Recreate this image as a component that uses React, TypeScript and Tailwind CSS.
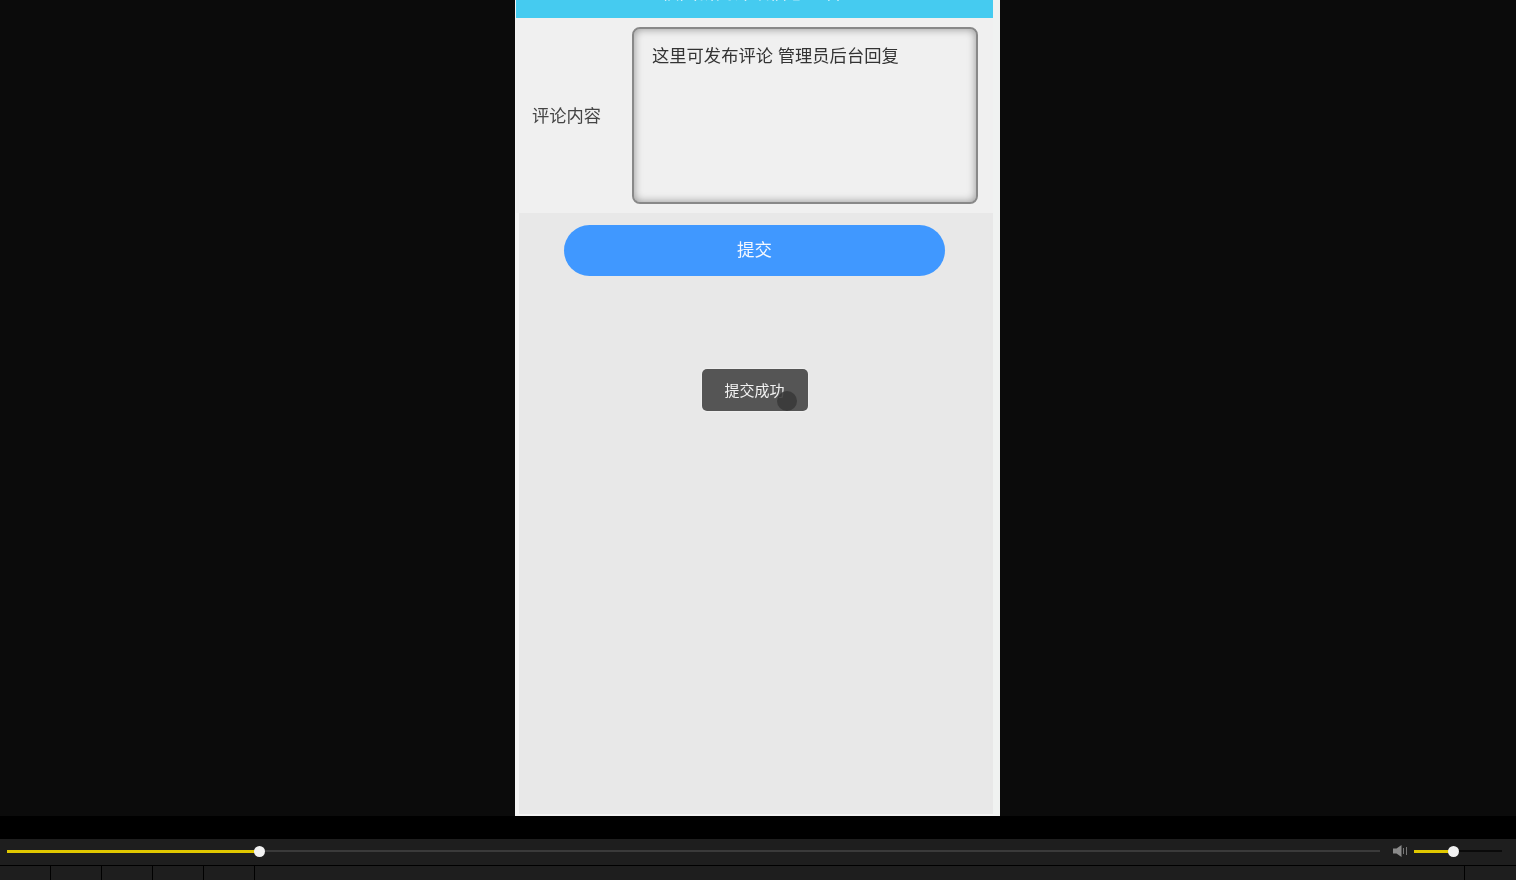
const font = { fontFamily: '"Liberation Sans","Noto Sans CJK SC",sans-serif' };

function Slider({ fill, track, knob, grow }: { fill: number; track: string; knob: number; grow?: boolean }) {
  return (
    <div className={`relative h-[2px] ${track} ${grow ? "flex-1" : "w-[88px]"}`}>
      <div className="absolute left-0 top-[-0.5px] h-[3px] bg-[#e0c800]" style={{ width: fill }} />
      <div
        className="absolute top-[-4.5px] h-[11px] w-[11px] rounded-full bg-[#f2f2f2]"
        style={{ left: knob }}
      />
    </div>
  );
}

export default function App() {
  return (
    <div className="flex h-[880px] w-[1516px] flex-col overflow-hidden bg-black blur-[0.35px]" style={font}>
      <div className="flex h-[816px] justify-center bg-[#0b0b0b]">
        <div className="ml-[-1px] flex h-[816px] w-[485px] flex-col border-b-[2px] border-l-[4px] border-r-[7px] border-b-[#f4f4f4] border-l-[#f4f4f4] border-r-[#f0f2f1] bg-[#e8e8e8]">
          <div className="-ml-[3px] flex h-[18px] items-end justify-center overflow-hidden bg-[#45cbf0] pr-[6px]">
            <span className="mb-[13px] whitespace-nowrap text-[18px] leading-[24px] text-[#f4fbfe]">校园新闻详细信息查看</span>
          </div>
          <div className="-ml-[3px] flex h-[195px] items-center bg-[#f0f0f0] pr-[15px]">
            <div className="w-[116px] pl-[16px] pt-[3px] text-[17.25px] text-[#444444]">评论内容</div>
            <div className="h-[177px] flex-1 rounded-[8px] border-2 border-[#888888] bg-[#f0f0f0] px-[18px] pb-[14px] pt-[15px] text-[17.3px] leading-[24px] text-[#333333] shadow-[inset_0_0_8px_rgba(0,0,0,0.4)]">
              这里可发布评论 管理员后台回复
            </div>
          </div>
          <div className="mt-[12px] flex justify-center pr-[3px]">
            <div className="flex h-[51px] w-[381px] items-center justify-center rounded-full bg-[#4098ff] text-[17.5px] text-[#f4f8ff]">
              提交
            </div>
          </div>
          <div className="mt-[93px] flex justify-center pr-[3px]">
            <div className="relative flex h-[42px] w-[106px] items-center justify-center rounded-[5px] bg-[#555555] pt-[2px] text-[15px] text-[#f2f2f2] shadow-[0_0_2px_#ffffff]">
              提交成功
              <div className="absolute left-[75px] top-[22px] h-[20px] w-[20px] rounded-full bg-[#3a3a3a]/90" />
            </div>
          </div>
        </div>
      </div>
      <div className="h-[23px] bg-black" />
      <div className="flex h-[26px] items-center bg-[#1e1e1e] pb-[2px] pl-[7px] pr-[14px]">
        <Slider grow fill={252} track="bg-[#3a3a3a]" knob={247} />
        <svg width="15" height="14" viewBox="0 0 15 14" className="ml-[13px] mr-[6px] shrink-0">
          <path d="M0 4.5h3.5L8.5 1v12L3.5 9.5H0z" fill="#8a8a8a" />
          <path d="M10.5 4v6M13.5 3v8" stroke="#777777" strokeWidth="1" />
        </svg>
        <Slider fill={35} track="bg-[#0a0a0a]" knob={34} />
      </div>
      <div className="flex h-[15px] border-t border-black bg-[#1e1e1e]">
        <div className="w-[51px] border-r border-black" />
        <div className="w-[51px] border-r border-black" />
        <div className="w-[51px] border-r border-black" />
        <div className="w-[51px] border-r border-black" />
        <div className="w-[51px] border-r border-black" />
        <div className="flex-1 border-r border-black" />
        <div className="w-[51px]" />
      </div>
    </div>
  );
}
